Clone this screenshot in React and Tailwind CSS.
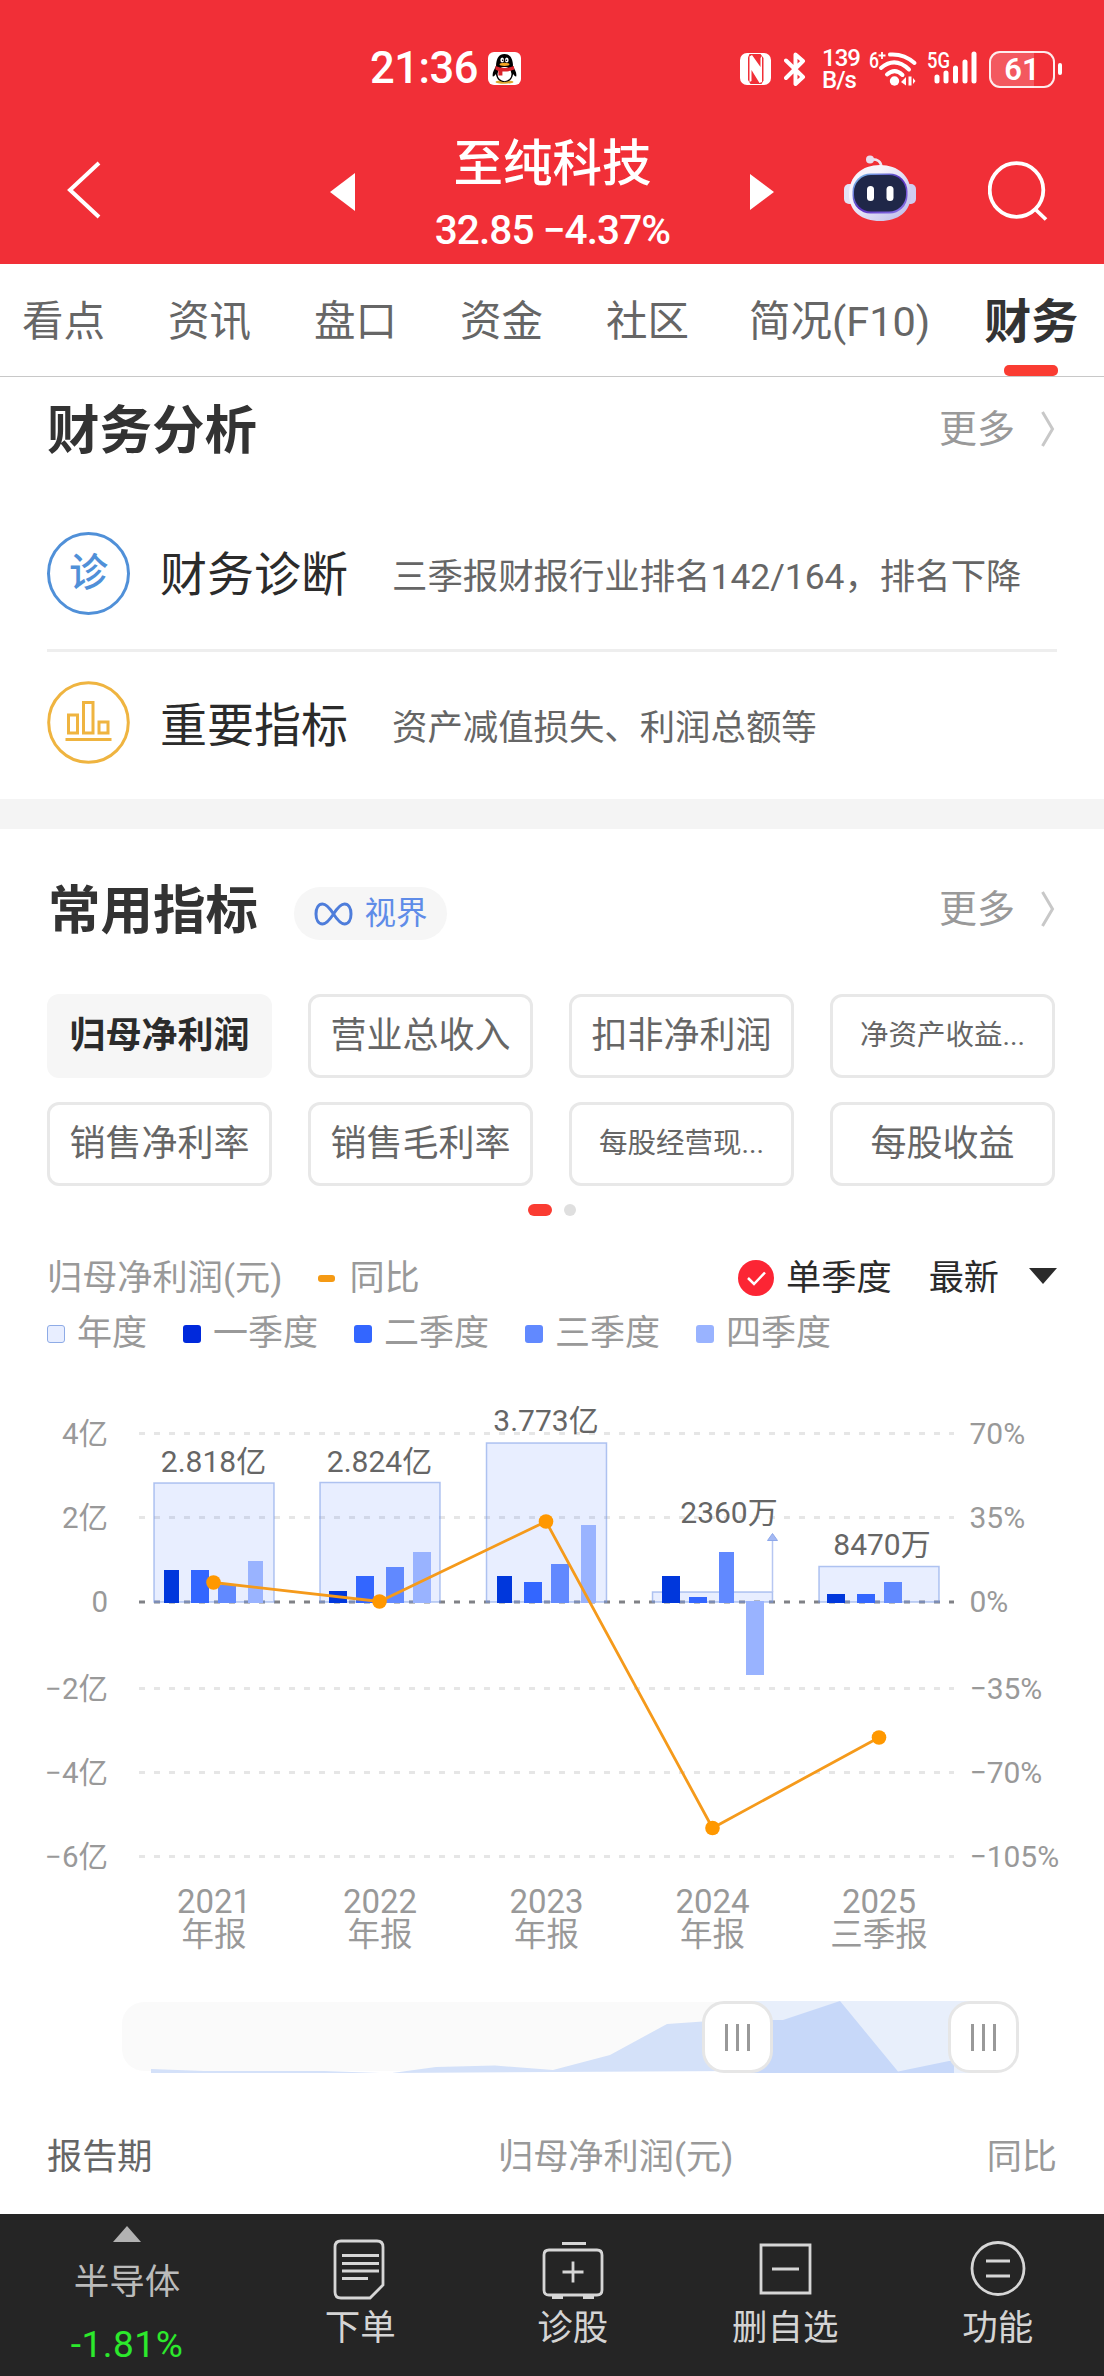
import React, { useState } from 'react'
import clsx from 'clsx'

const TABS = ['看点', '资讯', '盘口', '资金', '社区', '简况(F10)', '财务']

const INDICATORS = [
    { label: '归母净利润' },
    { label: '营业总收入' },
    { label: '扣非净利润' },
    { label: '净资产收益...', small: true },
    { label: '销售净利率' },
    { label: '销售毛利率' },
    { label: '每股经营现...', small: true },
    { label: '每股收益' },
]

const LEGEND = [
    { label: '年度', color: 'bg-[#e8eeff] border border-[#8eabe6]' },
    { label: '一季度', color: 'bg-[#0029dc]' },
    { label: '二季度', color: 'bg-[#3366ff]' },
    { label: '三季度', color: 'bg-[#6189ff]' },
    { label: '四季度', color: 'bg-[#99b3ff]' },
]

const QUARTER_COLORS = ['#0037dc', '#3366ff', '#6189ff', '#99b3ff']

// chart coordinates start at the top of the chart block (page y = 1380)
const ZERO_Y = 222
const YEARS = [
    { year: '2021', period: '年报', value: '2.818亿', x: 154, top: 103, labelX: 213.5, labelY: 92, bars: [[164, 15, 190], [191, 18, 190], [218, 18, 205], [248, 15, 181]] },
    { year: '2022', period: '年报', value: '2.824亿', x: 320, top: 102.5, labelX: 379.5, labelY: 92, bars: [[329, 18, 211], [356, 18, 196], [386, 18, 187], [413, 18, 172]] },
    { year: '2023', period: '年报', value: '3.773亿', x: 486.5, top: 63, labelX: 546, labelY: 51, bars: [[497, 15, 196], [524, 18, 202], [551, 18, 184], [581, 15, 145]] },
    { year: '2024', period: '年报', value: '2360万', x: 652.5, top: 212, labelX: 729, labelY: 143, bars: [[662, 18, 196], [689, 18, 217], [719, 15, 172], [746, 18, 295]] },
    { year: '2025', period: '三季报', value: '8470万', x: 819, top: 186.5, labelX: 882, labelY: 175, bars: [[827, 18, 214], [857, 18, 214], [884, 18, 202]] },
]

const GRID = [
    { y: 53.5, left: '4亿', right: '70%' },
    { y: 137.5, left: '2亿', right: '35%' },
    { y: 222, left: '0', right: '0%' },
    { y: 308.5, left: '−2亿', right: '−35%' },
    { y: 392.5, left: '−4亿', right: '−70%' },
    { y: 476.5, left: '−6亿', right: '−105%' },
]

const YOY = [[213.5, 202.5], [379.5, 221.5], [546, 141.5], [712.5, 448], [879, 357.5]]

const QQIcon = () => (
    <svg className="ml-3 size-[33px]" viewBox="0 0 33 33">
        <rect width="33" height="33" rx="6" fill="#fff" />
        <ellipse cx="16.5" cy="30" rx="9" ry="1.7" fill="#dca52c" />
        <path d="M8 14c-2 4-4 7-3.200 10.500.8.500 2-1 3-2.500C9 28 12 30 16.500 30s7.500-2 8.700-8c1 1.500 2.200 3 3 2.500C29 21 27 18 25 14z" fill="#000" />
        <ellipse cx="16.500" cy="22" rx="7" ry="7.200" fill="#fff" />
        <path d="M8 15c0-9 3-13 8.500-13S25 6 25 15z" fill="#000" />
        <ellipse cx="14.200" cy="8" rx="1.800" ry="2.500" fill="#fff" />
        <ellipse cx="18.800" cy="8" rx="1.800" ry="2.500" fill="#fff" />
        <circle cx="14.700" cy="8.300" r=".8" />
        <circle cx="18.400" cy="8.300" r=".8" />
        <ellipse cx="16.500" cy="12.300" rx="5" ry="1.600" fill="#f5a623" />
        <path d="M7.500 14q9 4 18.300 0l.6 3.500q-6 2.500-12 2v4h-4v-4.500l-3-1.500z" fill="#d9222a" />
    </svg>
)

const NfcIcon = () => (
    <svg className="h-8 w-[31px]" viewBox="0 0 31 32">
        <rect width="31" height="32" rx="7" fill="#fff" />
        <path d="M8 4.500 9.500 1h11L23.500 5v22.500L21.500 31h-11L8 27z" fill="#f12f37" />
        <path d="M9.500 3.500 12 2l8.500 12V5L22 3v26l-2.500 1L11.500 17v11L9.500 29z" fill="#fff" />
    </svg>
)

const WifiIcon = () => (
    <svg className="h-[38px] w-[50px] overflow-visible" viewBox="0 0 50 38">
        <text x="0" y="18" fontSize="22" fontWeight="500" fill="#fff" textLength="10" lengthAdjust="spacingAndGlyphs">6</text>
        <path d="M9.500 5.500h7M13 2v7" stroke="#fff" strokeWidth="1.800" />
        <g fill="none" stroke="#fff" strokeWidth="4" strokeLinecap="round">
            <path d="M21 4.500q14-1 24.500 8.500" />
            <path d="M12 18q14-12 28 1.500" />
            <path d="M18 24.500q8-7 15.500.500" />
        </g>
        <circle cx="25.500" cy="31" r="4.700" fill="#fff" />
        <path d="m32 32 5-5v8.500zM39.500 26.500h3v9h-3zM44 28l2.500 3L44 34z" fill="#fff" />
    </svg>
)

const SignalIcon = () => (
    <svg className="h-[38px] w-[51px] overflow-visible" viewBox="0 0 51 38">
        <text x="0" y="18" fontSize="22" fontWeight="500" fill="#fff" textLength="23" lengthAdjust="spacingAndGlyphs">5G</text>
        <g stroke="#fff" strokeWidth="5" strokeLinecap="round">
            <path d="M10 27v4M19 23v8M28.500 18v13M38 12v19M47 4v27" />
        </g>
    </svg>
)

const StatusBar = () => (
    <div className="flex h-[120px] items-start pt-[47px] text-white">
        <div className="flex w-[740px] items-start pl-[370px] pt-[5px]">
            <span className="w-[106px] text-[43.5px] font-medium leading-[34px] tracking-[-0.5px]">21:36</span>
            <QQIcon />
        </div>
        <div className="flex items-center">
            <NfcIcon />
            <svg className="ml-[13px] h-[34px] w-[22px]" viewBox="0 0 22 34" fill="none" stroke="#fff" strokeWidth="4" strokeLinecap="round" strokeLinejoin="round">
                <path d="M2 8.500 19 25l-7.500 7V2.500L19 9 2 26" />
            </svg>
            <div className="ml-4 flex w-[35px] flex-col text-[24px] font-medium leading-[22px] tracking-[-1px]">
                <span>139</span>
                <span>B/s</span>
            </div>
            <div className="ml-3"><WifiIcon /></div>
            <div className="ml-2"><SignalIcon /></div>
            <div className="ml-[11px] flex h-[37px] w-[66px] items-center justify-center rounded-[11px] border-[2.5px] border-white/90 bg-linear-to-r from-white/20 from-69% to-transparent to-69% text-[31px] font-semibold leading-none">
                61
            </div>
            <div className="ml-[3px] h-3 w-1 rounded-full bg-white" />
        </div>
    </div>
)

const RobotIcon = () => (
    <svg className="h-[67px] w-[72px]" viewBox="0 0 72 67">
        <defs>
            <linearGradient id="shell" x1="0" y1="0" x2="1" y2="1">
                <stop offset=".3" stopColor="#f7f4fc" />
                <stop offset="1" stopColor="#b9b7e8" />
            </linearGradient>
            <linearGradient id="visor" x1="0" y1="0" x2="1" y2="1">
                <stop offset="0" stopColor="#7fd0ef" />
                <stop offset=".5" stopColor="#5a2fc0" />
                <stop offset="1" stopColor="#8d7bea" />
            </linearGradient>
        </defs>
        <path d="M27 4.500q10-1 10.500 8" fill="none" stroke="#efe4f2" strokeWidth="2.600" />
        <circle cx="26" cy="4.500" r="4" fill="#e9dcee" />
        <rect x="0" y="29" width="11" height="20" rx="5" fill="#e4e2f5" />
        <rect x="61" y="29" width="11" height="20" rx="5" fill="#d0cdf0" />
        <path d="M36 10c18 0 31 11 31 29S54 66 36 66 5 57 5 39s13-29 31-29z" fill="url(#shell)" />
        <rect x="8.500" y="18.500" width="55" height="40" rx="18" fill="url(#visor)" />
        <rect x="10" y="20" width="52" height="36.500" rx="17" fill="#1f2748" />
        <rect x="23" y="31" width="7" height="15" rx="3.500" fill="#fff" />
        <rect x="42.500" y="31" width="7" height="15" rx="3.500" fill="#fff" />
    </svg>
)

const StockHeader = () => (
    <div className="flex h-[144px] items-start pl-[67px] text-white">
        <svg className="mt-[41px] h-[58px] w-[34px]" viewBox="0 0 34 58" fill="none" stroke="#fff" strokeWidth="4">
            <path d="M32 2 3 29l29 27" />
        </svg>
        <svg className="ml-[229px] mt-[53px] h-[38px] w-[25px]" viewBox="0 0 25 38">
            <path d="M25 0v38L0 19z" fill="#fff" />
        </svg>
        <div className="flex w-[395px] flex-col items-center pt-[19px]">
            <h1 className="text-[49.5px] font-medium leading-[50px]">至纯科技</h1>
            <p className="mt-5 whitespace-nowrap text-[40.5px] font-medium leading-[42px] tracking-[-0.9px]">32.85 −4.37%</p>
        </div>
        <svg className="mt-[54px] h-9 w-6" viewBox="0 0 24 36">
            <path d="M0 0v36l24-18z" fill="#fff" />
        </svg>
        <div className="ml-[70px] mt-[35px]"><RobotIcon /></div>
        <svg className="ml-[72px] mt-[41px] size-[60px]" viewBox="0 0 60 60" fill="none" stroke="#fff" strokeWidth="3.800">
            <circle cx="28.500" cy="29" r="26.800" />
            <path d="m47 48 11 10.500" />
        </svg>
    </div>
)

const Tabs = ({ active, onSelect }) => (
    <nav className="flex h-[113px] items-start gap-[63px] whitespace-nowrap border-b border-[#c8c8c8] pl-[22px] pt-[30px] text-[41.5px] text-[#666]">
        {TABS.map(tab => (
            <button
                key={tab}
                onClick={() => onSelect(tab)}
                className={clsx('flex h-[82px] flex-col items-center leading-[56px]', tab === active && '-ml-[9px] text-[47px] font-bold text-[#333]', tab === '简况(F10)' && '-ml-[3px]')}
            >
                <span>{tab}</span>
                {tab === active && <span className="mt-[15px] h-[11px] w-[54px] shrink-0 rounded-[5px] bg-[#fa3c32]" />}
            </button>
        ))}
    </nav>
)

const MoreLink = () => (
    <a className="ml-auto flex items-center pt-px text-[38px] leading-[50px] text-[#999]">
        更多
        <svg className="ml-[26px] mr-[2px] h-[36px] w-[14px]" viewBox="0 0 14 36" fill="none" stroke="#c8c8c8" strokeWidth="3">
            <path d="m1.500 1 10 17-10 17" />
        </svg>
    </a>
)

const DiagnoseIcon = () => (
    <div className="-mt-1 flex size-[83px] items-center justify-center rounded-full border-[3px] border-[#5090d8] text-[39px] font-medium leading-none text-[#5090d8]">
        诊
    </div>
)

const MetricsIcon = () => (
    <svg className="-mt-2 size-[83px]" viewBox="0 0 83 83" fill="none" stroke="#efb440" strokeWidth="3">
        <circle cx="41.500" cy="41.500" r="39.800" />
        <path d="M21.500 34h9v18h-9zM36.500 21.500h9.500V52h-9.500zM52 41h9v11h-9zM18.500 58.500h46" />
    </svg>
)

const AnalysisRow = ({ icon, title, desc }) => (
    <div className="flex h-[148px] items-center">
        {icon}
        <span className="ml-[30px] w-[188px] text-[47px] leading-[60px] text-[#2b2b2b]">{title}</span>
        <span className="ml-11 pt-1 text-[35.400px] leading-[50px] text-[#666]">{desc}</span>
    </div>
)

const Analysis = () => (
    <section className="h-[422px] px-[47px]">
        <div className="flex h-[124px] items-start pt-[26px]">
            <h2 className="text-[52.500px] font-bold leading-[56px] text-[#333]">财务分析</h2>
            <MoreLink />
        </div>
        <AnalysisRow icon={<DiagnoseIcon />} title="财务诊断" desc="三季报财报行业排名142/164，排名下降" />
        <div className="border-t-[3px] border-[#eee]">
            <AnalysisRow icon={<MetricsIcon />} title="重要指标" desc="资产减值损失、利润总额等" />
        </div>
    </section>
)

const IndicatorGrid = ({ active, onSelect }) => (
    <div>
        <div className="grid grid-cols-[repeat(4,225px)] gap-x-9 gap-y-6">
            {INDICATORS.map(({ label, small }) => (
                <button
                    key={label}
                    onClick={() => onSelect(label)}
                    className={clsx(
                        'h-[84px] whitespace-nowrap rounded-xl leading-[50px]',
                        small ? 'text-[28.500px]' : 'text-[36px]',
                        label === active ? 'bg-[#f6f6f6] font-bold text-[#2b2b2b]' : 'border-[3px] border-[#e8e8e8] text-[#666]'
                    )}
                >
                    {label}
                </button>
            ))}
        </div>
        <div className="mt-[18px] flex justify-center gap-3">
            <span className="h-3 w-6 rounded-full bg-[#fa3c32]" />
            <span className="size-3 rounded-full bg-[#dfdfdf]" />
        </div>
    </div>
)

const ChartLegend = () => (
    <div className="mt-[37px] text-[35.200px] leading-[50px] text-[#999]">
        <div className="flex items-center">
            <span>归母净利润(元)</span>
            <span className="ml-9 mr-3.5 h-[7px] w-[17px] rounded-[3px] bg-[#f59a14]" />
            <span>同比</span>
            <div className="ml-auto flex items-center text-[#2b2b2b]">
                <svg className="mr-3 size-9" viewBox="0 0 36 36" fill="none">
                    <circle cx="18" cy="18" r="18" fill="#fc2534" />
                    <path d="m10 18 6 6 11-11.500" stroke="#fff" strokeWidth="2.500" />
                </svg>
                <span>单季度</span>
                <span className="ml-[37px]">最新</span>
                <svg className="ml-[30px] mb-1 h-4 w-7" viewBox="0 0 28 16">
                    <path d="M0 0h28L14 16z" fill="#2b2b2b" />
                </svg>
            </div>
        </div>
        <div className="mt-[6px] flex items-center gap-9 text-[35px]">
            {LEGEND.map(({ label, color }) => (
                <div key={label} className="flex items-center gap-3">
                    <span className={clsx('size-[18px] rounded-[3px]', color)} />
                    <span>{label}</span>
                </div>
            ))}
        </div>
    </div>
)

const ProfitChart = () => (
    <svg className="block h-[580px] w-[1104px]" viewBox="0 0 1104 580" fontSize="30">
        {GRID.map(({ y, left, right }) => (
            <g key={y} fill="#999">
                <path d={`M139 ${y}H954`} stroke={y === ZERO_Y ? '#808186' : '#e6e6e6'} strokeWidth="3" strokeDasharray="6 9" />
                <text x="108" y={y + 10} textAnchor="end" fontSize="29.500">{left}</text>
                <text x="969.500" y={y + 10}>{right}</text>
            </g>
        ))}
        {YEARS.map(({ year, period, value, x, top, labelX, labelY, bars }) => (
            <g key={year} textAnchor="middle">
                <rect x={x} y={top} width="120" height={ZERO_Y - top} fill="#3366ff" fillOpacity=".115" stroke="#7f9fe6" strokeOpacity=".6" strokeWidth="1.500" />
                {bars.map(([bx, width, by], i) => (
                    <rect key={bx} x={bx} y={Math.min(by, ZERO_Y - 1)} width={width} height={by > ZERO_Y ? by - ZERO_Y + 1 : ZERO_Y + 1 - by} fill={QUARTER_COLORS[i]} />
                ))}
                <text x={labelX} y={labelY} fill="#666">{value}</text>
                <text x={x + 60} y="533" fontSize="33" fill="#999">{year}</text>
                <text x={x + 60} y="565.500" fontSize="32.500" fill="#999">{period}</text>
            </g>
        ))}
        <path d="M772.500 212v-52" stroke="#b7c7f2" strokeWidth="1.500" />
        <path d="m772.500 153.500 5 7h-10z" fill="#a3b8f3" stroke="#8ea8ea" />
        <polyline points={YOY.join(' ')} fill="none" stroke="#f59a1b" strokeWidth="2.800" />
        {YOY.map(([x, y]) => <circle key={x} cx={x} cy={y} r="7.300" fill="#ff9800" />)}
    </svg>
)

const Handle = () => (
    <div className="flex h-[72px] w-[71px] items-center justify-center gap-2 rounded-[22px] border-[3px] border-[#e6e6e6] bg-white">
        <span className="h-[27px] w-[3px] bg-[#999]" />
        <span className="h-[27px] w-[3px] bg-[#999]" />
        <span className="h-[27px] w-[3px] bg-[#999]" />
    </div>
)

const RangeSlider = () => (
    <div className="relative ml-[122px] mt-[41px] h-[72px] w-[897px]">
        <svg className="block h-[72px] w-[897px]" viewBox="0 0 897 72">
            <rect y="1" width="896" height="69" rx="22" fill="#fafafa" />
            <rect x="615" width="246" height="72" fill="#e8effb" />
            <path d="M29 72v-4l53 2h120l56 2zM270 72l44-6 59-1.500 58 4.500 57-15 57-31 36-2.500 34 0v49.500z" fill="#d4e1f9" />
            <path d="M615 72V19h46l57-19 58 70.500 51-10.500h5v12z" fill="#c7d8f9" />
        </svg>
        <div className="absolute left-[580px] top-0"><Handle /></div>
        <div className="absolute left-[826px] top-0"><Handle /></div>
    </div>
)

const TableHead = () => (
    <div className="mt-[59px] flex h-[82px] items-start px-[47px] text-[35.200px] leading-[50px] text-[#999]">
        <span className="w-[451px] text-[#666]">报告期</span>
        <span>归母净利润(元)</span>
        <span className="ml-auto">同比</span>
    </div>
)

const NAV = [
    {
        label: '下单',
        icon: <path d="M11 2h36q6 0 6 6v38L40 59H11q-6 0-6-6V8q0-6 6-6zM12 16.500h37M12 24.500h37M12 32h37M12 39.500h26" />,
    },
    {
        label: '诊股',
        icon: <path d="M6 11h48q5 0 5 5v35q0 5-5 5H6q-5 0-5-5V16q0-5 5-5zM19 4.500h24M30 22.500v21M19.500 33h21M9 58.500h11M40 58.500h11" />,
    },
    {
        label: '删自选',
        icon: <path d="M6 6h49v48H6zM17 30h27" />,
    },
    {
        label: '功能',
        icon: <path d="M30 3.500a26 26 0 1 1 0 52 26 26 0 0 1 0-52zM18 22h24M18 37h24" />,
    },
]

const BottomBar = () => (
    <footer className="flex h-[162px] bg-[#252525] text-[35.500px] text-[#d4d4d4]">
        <div className="flex w-[254px] flex-col items-center pt-3 text-[#bbb]">
            <svg className="h-4 w-7" viewBox="0 0 28 16">
                <path d="m14 0 14 16H0z" fill="#b2b2b2" />
            </svg>
            <span className="mt-[15px] leading-[50px]">半导体</span>
            <span className="mt-[13px] text-[37px] leading-[50px] tracking-[0.5px] text-[#2ce92c]">-1.81%</span>
        </div>
        {NAV.map(({ label, icon }) => (
            <div key={label} className="flex w-[212.500px] flex-col items-center pt-[25px]">
                <svg className="h-[62px] w-[60px] overflow-visible" viewBox="0 0 60 62" fill="none" stroke="#d6d6d6" strokeWidth="2.800">{icon}</svg>
                <span className="mt-0.5 leading-[50px]">{label}</span>
            </div>
        ))}
    </footer>
)

const App = () => {
    const [tab, setTab] = useState('财务')
    const [indicator, setIndicator] = useState('归母净利润')

    return (
        <div className="h-[2376px] w-[1104px] overflow-hidden bg-white font-[Roboto,'Noto_Sans_CJK_SC',sans-serif]">
            <header className="h-[264px] bg-[#f12f37]">
                <StatusBar />
                <StockHeader />
            </header>
            <Tabs active={tab} onSelect={setTab} />
            <Analysis />
            <div className="h-[30px] bg-[#f4f4f4]" />
            <section className="h-[551px] px-[47px]">
                <div className="flex h-[165px] items-start pt-[54px]">
                    <h2 className="ml-px text-[52.500px] font-bold leading-[56px] text-[#333]">常用指标</h2>
                    <div className="ml-9 mt-1 flex h-[53px] w-[153px] items-center justify-center gap-3 rounded-full bg-[#f6f6f6] text-[31.500px] text-[#5f8ce8]">
                        <svg className="h-6 w-[39px]" viewBox="0 0 39 24" fill="none" stroke="#4e7ddb" strokeWidth="3">
                            <path d="M19.500 12C15 5 12 2 8.500 2 4.500 2 2 6 2 12s2.500 10 6.500 10C12 22 15 19 19.500 12S27 2 30.500 2C34.500 2 37 6 37 12s-2.500 10-6.500 10C27 22 24 19 19.500 12z" />
                        </svg>
                        <span className="leading-[48px]">视界</span>
                    </div>
                    <MoreLink />
                </div>
                <IndicatorGrid active={indicator} onSelect={setIndicator} />
                <ChartLegend />
            </section>
            <ProfitChart />
            <RangeSlider />
            <TableHead />
            <BottomBar />
        </div>
    )
}

export default App
